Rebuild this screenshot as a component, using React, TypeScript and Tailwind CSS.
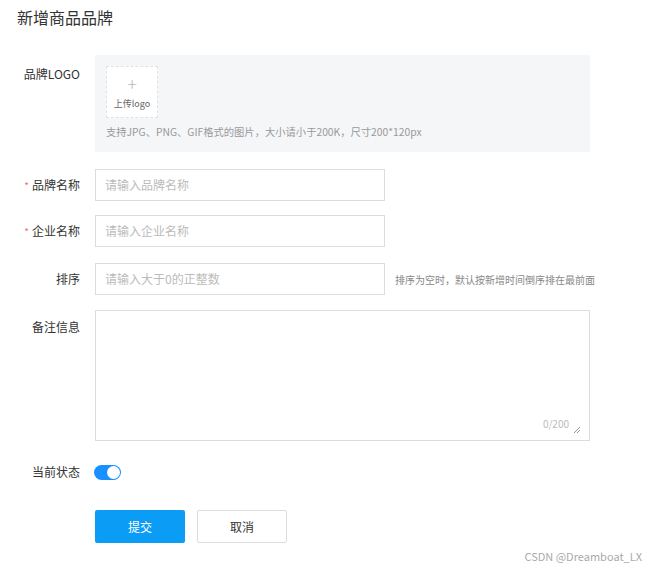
const font = "font-['Microsoft_YaHei','Noto_Sans_CJK_SC',sans-serif]";

function Label({ text, required }: { text: string; required?: boolean }) {
  return (
    <div className="flex w-[80px] shrink-0 items-center justify-end pr-0 text-[12px] text-[#333]">
      {required && <span className="mr-[3px] text-[10px] text-[#f56c6c]">*</span>}
      {text}
    </div>
  );
}

export default function App() {
  return (
    <div className={`relative h-[570px] w-[650px] bg-white ${font}`}>
      <h1 className="pl-[17px] pt-[6px] text-[16px] leading-[22px] text-[#333]">新增商品品牌</h1>

      <div className="mt-[27px] flex flex-col">
        {/* logo */}
        <div className="flex">
          <div className="flex w-[80px] shrink-0 justify-end pt-[10px] text-[12px] text-[#333]">品牌LOGO</div>
          <div className="ml-[15px] h-[97px] w-[495px] bg-[#f5f6f8] pl-[11px] pt-[11px]">
            <div className="flex h-[52px] w-[52px] flex-col items-center border border-dashed border-[#e2e2e2] bg-white">
              <span className="mt-[6px] text-[18px] font-light leading-[20px] text-[#bbb]">+</span>
              <span className="mt-[5px] text-[9px] leading-[12px] text-[#666]">上传logo</span>
            </div>
            <p className="mt-[7px] text-[10.3px] leading-[14px] text-[#999]">
              支持JPG、PNG、GIF格式的图片，大小请小于200K，尺寸200*120px
            </p>
          </div>
        </div>

        <div className="mt-[17px] flex items-center">
          <Label text="品牌名称" required />
          <div className="ml-[15px] flex h-[32px] w-[290px] items-center border border-[#dcdcdc] pl-[9px] text-[12px] text-[#bbb]">
            请输入品牌名称
          </div>
        </div>

        <div className="mt-[14px] flex items-center">
          <Label text="企业名称" required />
          <div className="ml-[15px] flex h-[32px] w-[290px] items-center border border-[#dcdcdc] pl-[9px] text-[12px] text-[#bbb]">
            请输入企业名称
          </div>
        </div>

        <div className="mt-[16px] flex items-center">
          <Label text="排序" />
          <div className="ml-[15px] flex h-[32px] w-[290px] items-center border border-[#dcdcdc] pl-[9px] text-[12px] text-[#bbb]">
            请输入大于0的正整数
          </div>
          <span className="ml-[10px] text-[10px] text-[#888]">排序为空时，默认按新增时间倒序排在最前面</span>
        </div>

        <div className="mt-[15px] flex">
          <div className="flex w-[80px] shrink-0 justify-end pt-[8px] text-[12px] text-[#333]">备注信息</div>
          <div className="relative ml-[15px] h-[131px] w-[495px] border border-[#dcdcdc]">
            <span className="absolute bottom-[9px] right-[20px] text-[10px] text-[#bbb]">0/200</span>
            <svg className="absolute bottom-[6px] right-[8px]" width="8" height="8" viewBox="0 0 8 8">
              <path d="M1 7 L7 1 M4 7 L7 4" stroke="#888" strokeWidth="0.9" fill="none" />
            </svg>
          </div>
        </div>

        <div className="mt-[22px] flex items-center">
          <Label text="当前状态" />
          <div className="ml-[14px] flex h-[15px] w-[27px] items-center justify-end rounded-full bg-[#1890ff] pr-[1px]">
            <div className="h-[13px] w-[13px] rounded-full bg-white" />
          </div>
        </div>

        <div className="ml-[95px] mt-[29px] flex gap-[12px]">
          <button className="h-[33px] w-[90px] rounded-[2px] bg-[#0b9cf6] text-[12px] text-white">提交</button>
          <button className="h-[33px] w-[90px] rounded-[2px] border border-[#dcdcdc] bg-white text-[12px] text-[#333]">取消</button>
        </div>
      </div>

      <div className="absolute bottom-[6px] right-[8px] text-[11px] text-[#aaa]">CSDN @Dreamboat_LX</div>
    </div>
  );
}
